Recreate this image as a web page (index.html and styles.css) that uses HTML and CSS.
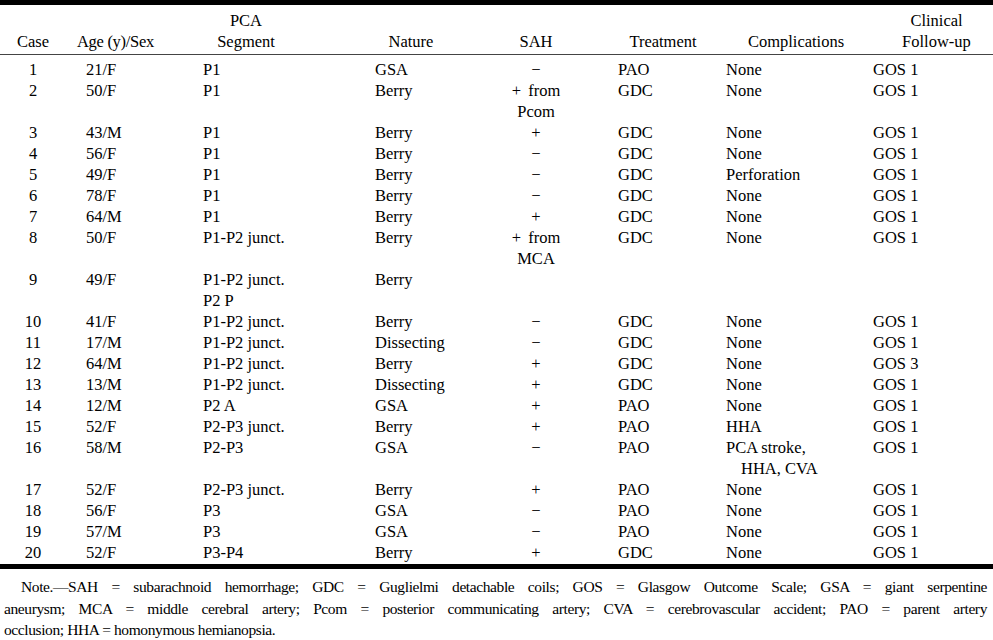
FILE: index.html
```html
<!DOCTYPE html>
<html>
<head>
<meta charset="utf-8">
<link rel="stylesheet" href="styles.css">
</head>
<body>
<div class="page">
  <div class="rule-thick"></div>
  <table class="tbl">
    <colgroup>
      <col class="c1"><col class="c2"><col class="c3"><col class="c4"><col class="c5"><col class="c6"><col class="c7"><col class="c8">
    </colgroup>
    <thead>
      <tr>
        <th class="h1">Case</th>
        <th class="h2">Age (y)/Sex</th>
        <th class="h3">PCA<br>Segment</th>
        <th class="h4">Nature</th>
        <th class="h5">SAH</th>
        <th class="h6">Treatment</th>
        <th class="h7">Complications</th>
        <th class="h8">Clinical<br>Follow-up</th>
      </tr>
    </thead>
    <tbody>
      <tr class="first"><td class="num">1</td><td class="age">21/F</td><td>P1</td><td>GSA</td><td class="sah">−</td><td>PAO</td><td>None</td><td>GOS 1</td></tr>
      <tr><td class="num">2</td><td class="age">50/F</td><td>P1</td><td>Berry</td><td class="sah">+ from<br>Pcom</td><td>GDC</td><td>None</td><td>GOS 1</td></tr>
      <tr><td class="num">3</td><td class="age">43/M</td><td>P1</td><td>Berry</td><td class="sah">+</td><td>GDC</td><td>None</td><td>GOS 1</td></tr>
      <tr><td class="num">4</td><td class="age">56/F</td><td>P1</td><td>Berry</td><td class="sah">−</td><td>GDC</td><td>None</td><td>GOS 1</td></tr>
      <tr><td class="num">5</td><td class="age">49/F</td><td>P1</td><td>Berry</td><td class="sah">−</td><td>GDC</td><td>Perforation</td><td>GOS 1</td></tr>
      <tr><td class="num">6</td><td class="age">78/F</td><td>P1</td><td>Berry</td><td class="sah">−</td><td>GDC</td><td>None</td><td>GOS 1</td></tr>
      <tr><td class="num">7</td><td class="age">64/M</td><td>P1</td><td>Berry</td><td class="sah">+</td><td>GDC</td><td>None</td><td>GOS 1</td></tr>
      <tr><td class="num">8</td><td class="age">50/F</td><td>P1-P2 junct.</td><td>Berry</td><td class="sah">+ from<br>MCA</td><td>GDC</td><td>None</td><td>GOS 1</td></tr>
      <tr><td class="num">9</td><td class="age">49/F</td><td>P1-P2 junct.<br>P2 P</td><td>Berry</td><td class="sah"></td><td></td><td></td><td></td></tr>
      <tr><td class="num">10</td><td class="age">41/F</td><td>P1-P2 junct.</td><td>Berry</td><td class="sah">−</td><td>GDC</td><td>None</td><td>GOS 1</td></tr>
      <tr><td class="num">11</td><td class="age">17/M</td><td>P1-P2 junct.</td><td>Dissecting</td><td class="sah">−</td><td>GDC</td><td>None</td><td>GOS 1</td></tr>
      <tr><td class="num">12</td><td class="age">64/M</td><td>P1-P2 junct.</td><td>Berry</td><td class="sah">+</td><td>GDC</td><td>None</td><td>GOS 3</td></tr>
      <tr><td class="num">13</td><td class="age">13/M</td><td>P1-P2 junct.</td><td>Dissecting</td><td class="sah">+</td><td>GDC</td><td>None</td><td>GOS 1</td></tr>
      <tr><td class="num">14</td><td class="age">12/M</td><td>P2 A</td><td>GSA</td><td class="sah">+</td><td>PAO</td><td>None</td><td>GOS 1</td></tr>
      <tr><td class="num">15</td><td class="age">52/F</td><td>P2-P3 junct.</td><td>Berry</td><td class="sah">+</td><td>PAO</td><td>HHA</td><td>GOS 1</td></tr>
      <tr><td class="num">16</td><td class="age">58/M</td><td>P2-P3</td><td>GSA</td><td class="sah">−</td><td>PAO</td><td class="hang">PCA stroke,<br>HHA, CVA</td><td>GOS 1</td></tr>
      <tr><td class="num">17</td><td class="age">52/F</td><td>P2-P3 junct.</td><td>Berry</td><td class="sah">+</td><td>PAO</td><td>None</td><td>GOS 1</td></tr>
      <tr><td class="num">18</td><td class="age">56/F</td><td>P3</td><td>GSA</td><td class="sah">−</td><td>PAO</td><td>None</td><td>GOS 1</td></tr>
      <tr><td class="num">19</td><td class="age">57/M</td><td>P3</td><td>GSA</td><td class="sah">−</td><td>PAO</td><td>None</td><td>GOS 1</td></tr>
      <tr class="last"><td class="num">20</td><td class="age">52/F</td><td>P3-P4</td><td>Berry</td><td class="sah">+</td><td>GDC</td><td>None</td><td>GOS 1</td></tr>
    </tbody>
  </table>
  <div class="rule-bottom"></div>
  <div class="note">
    <div class="nl nl1">Note.—SAH = subarachnoid hemorrhage; GDC = Guglielmi detachable coils; GOS = Glasgow Outcome Scale; GSA = giant serpentine</div>
    <div class="nl">aneurysm; MCA = middle cerebral artery; Pcom = posterior communicating artery; CVA = cerebrovascular accident; PAO = parent artery</div>
    <div class="nl nl3">occlusion; HHA = homonymous hemianopsia.</div>
  </div>
</div>
</body>
</html>
```

FILE: styles.css
```css
html, body {
  margin: 0;
  padding: 0;
  background: #ffffff;
}

.page {
  width: 993px;
  font-family: "Liberation Serif", "Times New Roman", serif;
  font-size: 16.5px;
  color: #000;
}

.rule-thick {
  height: 5px;
  background: #000;
}

.tbl {
  width: 993px;
  border-collapse: collapse;
  table-layout: fixed;
}

.c1 { width: 70px; }
.c2 { width: 133px; }
.c3 { width: 172px; }
.c4 { width: 127px; }
.c5 { width: 116px; }
.c6 { width: 108px; }
.c7 { width: 147px; }
.c8 { width: 120px; }

.tbl th {
  font-weight: normal;
  line-height: 21px;
  vertical-align: bottom;
  padding: 5px 0 2px 0;
  border-bottom: 1.5px solid #444;
  white-space: nowrap;
}

.h1 { text-align: center; padding-right: 4px !important; }
.h2 { text-align: left; padding-left: 7px !important; letter-spacing: -0.3px; }
.h3 { text-align: center; padding-right: 86px !important; }
.h4 { text-align: center; padding-right: 55px !important; }
.h5 { text-align: center; padding-right: 48px !important; }
.h6 { text-align: center; padding-right: 18px !important; }
.h7 { text-align: center; padding-right: 7px !important; }
.h8 { text-align: center; padding-left: 7px !important; }

.tbl td {
  line-height: 21px;
  padding: 0;
  vertical-align: top;
  text-align: left;
  white-space: nowrap;
}

.tbl tr.first td { padding-top: 4px; }
.tbl tr.last td { padding-bottom: 1px; }

.tbl td.num { text-align: center; padding-right: 4px; }
.tbl td.age { padding-left: 16px; }
.tbl td.sah { text-align: center; padding-right: 48px; word-spacing: 3px; }
.tbl td.hang { padding-left: 15px; text-indent: -15px; }

.rule-bottom {
  height: 5px;
  background: #000;
}

.note {
  padding: 7px 6px 0 4px;
  font-size: 15.5px;
  line-height: 21.5px;
  letter-spacing: -0.4px;
}

.nl {
  text-align: justify;
  text-align-last: justify;
  white-space: nowrap;
}

.nl1 { padding-left: 17px; }

.nl3 {
  text-align: left;
  text-align-last: left;
}
```
